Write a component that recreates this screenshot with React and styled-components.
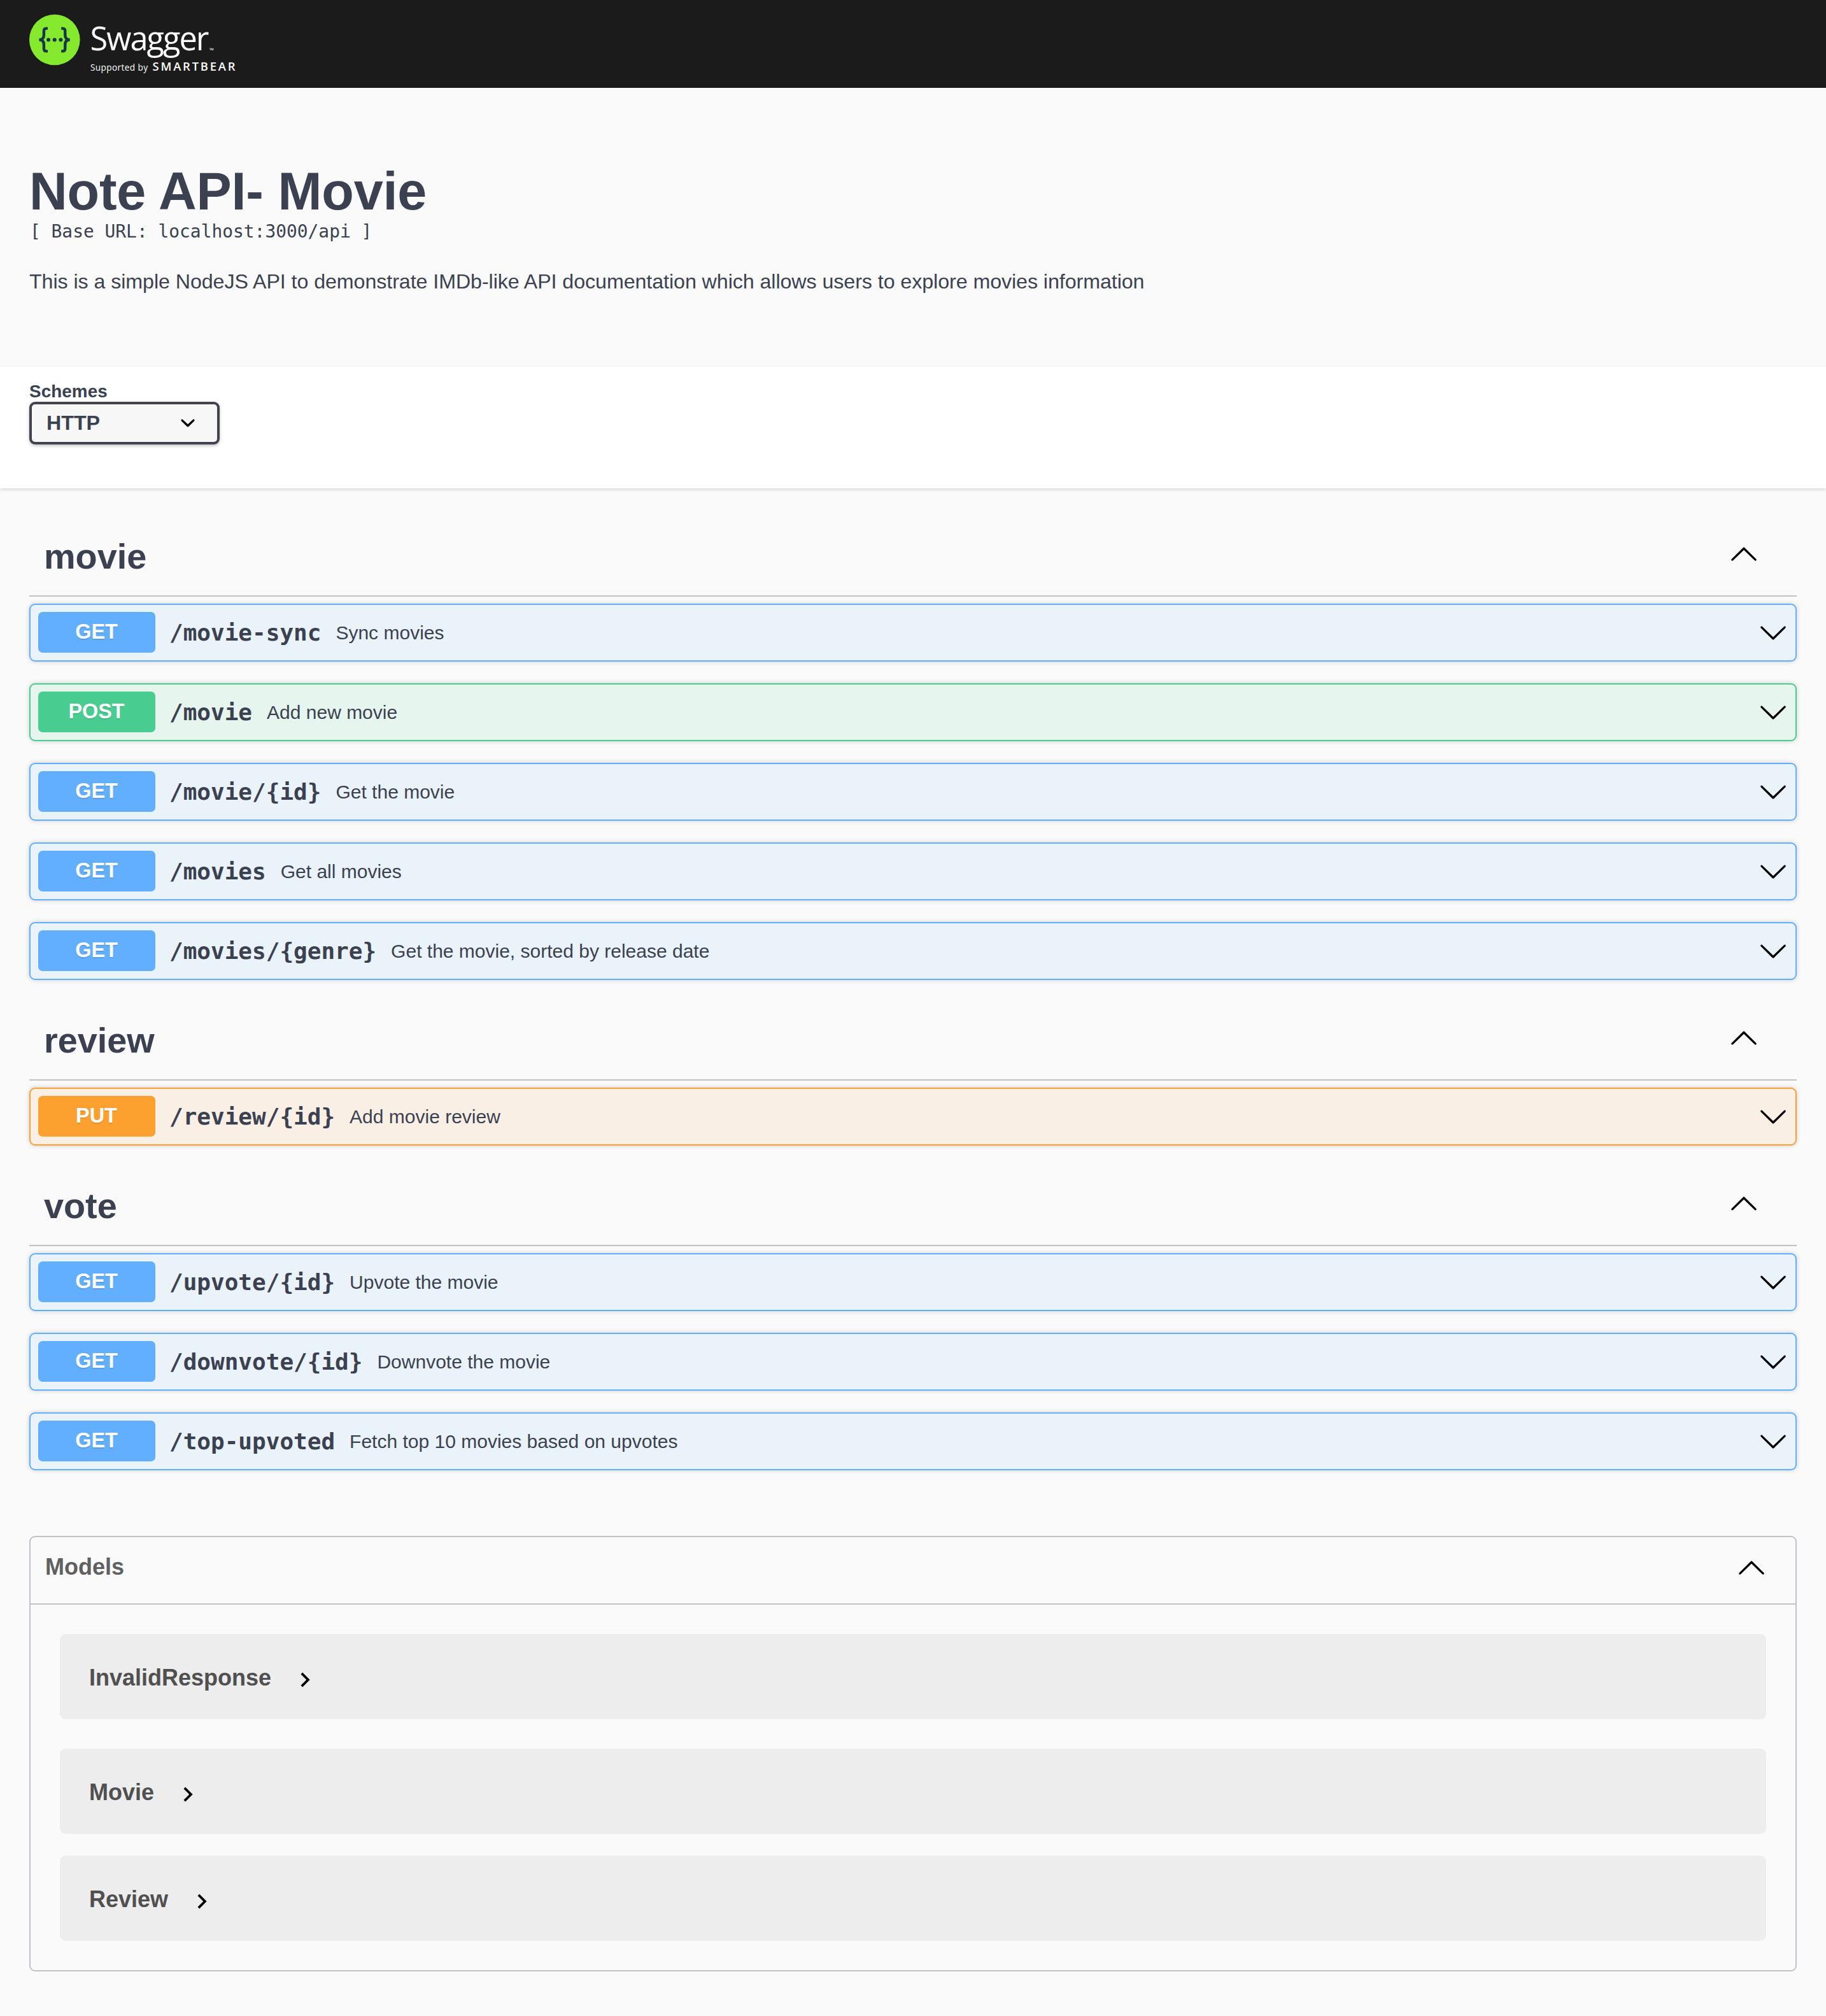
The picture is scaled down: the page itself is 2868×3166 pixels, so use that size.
import React from "react";
import styled, { createGlobalStyle } from "styled-components";

const sans = '"Liberation Sans", Arial, sans-serif';
const mono = '"DejaVu Sans Mono", monospace';

const METHOD_COLORS = {
  GET: { main: "#61affe", soft: "#eaf2fa" },
  POST: { main: "#49cc90", soft: "#e6f5ed" },
  PUT: { main: "#fca130", soft: "#faefe4" },
};

const SECTIONS = [
  {
    name: "movie",
    operations: [
      ["GET", "/movie-sync", "Sync movies"],
      ["POST", "/movie", "Add new movie"],
      ["GET", "/movie/{id}", "Get the movie"],
      ["GET", "/movies", "Get all movies"],
      ["GET", "/movies/{genre}", "Get the movie, sorted by release date"],
    ],
  },
  { name: "review", operations: [["PUT", "/review/{id}", "Add movie review"]] },
  {
    name: "vote",
    operations: [
      ["GET", "/upvote/{id}", "Upvote the movie"],
      ["GET", "/downvote/{id}", "Downvote the movie"],
      ["GET", "/top-upvoted", "Fetch top 10 movies based on upvotes"],
    ],
  },
];

const MODELS = [
  { name: "InvalidResponse", gap: 46 },
  { name: "Movie", gap: 34 },
  { name: "Review", gap: 0 },
];

const GlobalStyle = createGlobalStyle`
  *, *::before, *::after { box-sizing: border-box; }
  body {
    margin: 0;
    background: #fafafa;
    color: #3b4151;
    font-family: ${sans};
  }
  h1, h2, h3, h4, p, pre { margin: 0; font-weight: inherit; }
`;

const Page = styled.div`
  min-height: 3166px;
  background: #fafafa;
`;

const Topbar = styled.header`
  display: flex;
  height: 138px;
  padding: 0 46px;
  background: #1b1b1b;
`;

const Logo = styled.svg`
  display: block;
  width: 340px;
  height: 138px;
`;

const Info = styled.section`
  height: 438px;
  padding: 118px 46px 0;
`;

const Title = styled.h1`
  font-size: 82.8px;
  font-weight: 700;
  letter-spacing: -0.2px;
  line-height: 90px;
`;

const BaseUrl = styled.pre`
  padding-left: 1px;
  font: 27.9px/36px ${mono};
`;

const Description = styled.p`
  margin-top: 37px;
  font-size: 32.2px;
  letter-spacing: -0.06px;
  line-height: 46px;
`;

const SchemeBar = styled.section`
  height: 191px;
  padding: 23px 46px 0;
  background: #fff;
  box-shadow: 0 2px 5px rgba(0, 0, 0, 0.15);
`;

const SchemeLabel = styled.div`
  font-size: 27.8px;
  font-weight: 700;
  letter-spacing: 0.1px;
  line-height: 32px;
`;

const SchemeSelect = styled.div`
  display: flex;
  align-items: center;
  justify-content: space-between;
  width: 299px;
  height: 67px;
  padding: 0 23px 1px;
  border: 4px solid #41444e;
  border-radius: 9px;
  background: #f7f7f7;
  box-shadow: 0 2px 5px rgba(0, 0, 0, 0.25);
  font-size: 32.2px;
  font-weight: 700;
`;

const Glyph = styled.svg`
  display: block;
  flex: none;
  width: 46px;
  height: 46px;
  fill: #000;
`;

const Content = styled.main`
  padding: 46px 46px 0;
`;

const SectionHeader = styled.div`
  display: flex;
  align-items: center;
  justify-content: space-between;
  height: 124px;
  margin-bottom: 11px;
  padding: 0 60px 0 23px;
  border-bottom: 2px solid rgba(59, 65, 81, 0.3);

  & > svg { margin-bottom: 10px; }
`;

const SectionName = styled.h3`
  padding-bottom: 1px;
  font-size: 55.8px;
  font-weight: 700;
  line-height: 64px;
`;

const Operation = styled.div`
  display: flex;
  align-items: center;
  height: 91px;
  margin-bottom: 34px;
  padding: 0 12px;
  border: 2px solid ${(p) => METHOD_COLORS[p.$method].main};
  border-radius: 9px;
  background: ${(p) => METHOD_COLORS[p.$method].soft};
  box-shadow: 0 0 7px rgba(0, 0, 0, 0.19);

  & > svg { margin-bottom: 1px; }
`;

const Method = styled.span`
  width: 184px;
  height: 64px;
  margin: 0 22px 1px 0;
  padding-right: 1px;
  border-radius: 7px;
  background: ${(p) => METHOD_COLORS[p.$method].main};
  color: #fff;
  font-size: 32.4px;
  font-weight: 700;
  line-height: 63px;
  text-align: center;
  text-shadow: 0 2px 0 rgba(0, 0, 0, 0.1);
`;

const Path = styled.span`
  font: 700 36px/42px ${mono};
`;

const Summary = styled.span`
  flex: 1;
  padding: 1px 0 0 23px;
  font-size: 30px;
  line-height: 36px;
`;

const Models = styled.section`
  margin-top: 103px;
  border: 2px solid #c1c2c8;
  border-radius: 9px;
`;

const ModelsHeader = styled.div`
  display: flex;
  align-items: center;
  justify-content: space-between;
  height: 106px;
  padding: 0 46px 10px 23px;
  border-bottom: 2px solid #c1c2c8;
  color: #606060;
  font-size: 36px;
  font-weight: 700;
`;

const ModelList = styled.div`
  padding: 46px;
`;

const ModelBox = styled.div`
  display: flex;
  align-items: center;
  gap: 30px;
  height: 134px;
  margin-bottom: ${(p) => p.$gap}px;
  padding: 4px 46px 0;
  border-radius: 9px;
  background: #ededed;
  color: #505050;
  font-size: 36px;
  font-weight: 700;

  & > svg { margin-top: 6px; }
`;

const ArrowDown = () => (
  <Glyph viewBox="0 0 20 20">
    <path d="M17.418 6.109c.272-.268.709-.268.979 0s.271.701 0 .969l-7.908 7.83c-.27.268-.707.268-.979 0l-7.908-7.83c-.27-.268-.27-.701 0-.969.271-.268.709-.268.979 0L10 13.25l7.418-7.141z" />
  </Glyph>
);

const ArrowUp = () => (
  <Glyph viewBox="0 0 20 20">
    <path d="M17.418 14.908c.272.268.709.268.979 0s.271-.701 0-.969l-7.908-7.83c-.27-.268-.707-.268-.979 0l-7.908 7.83c-.27.268-.27.701 0 .969.271.268.709.268.979 0L10 7.767l7.418 7.141z" />
  </Glyph>
);

const SelectArrow = () => (
  <Glyph viewBox="0 0 20 20">
    <path d="M13.418 7.859c.271-.268.709-.268.978 0s.272.701 0 .969l-3.908 3.83c-.27.268-.707.268-.979 0l-3.908-3.83c-.27-.267-.27-.701 0-.969.271-.268.709-.268.978 0L10 11l3.418-3.141z" />
  </Glyph>
);

const ToggleArrow = () => (
  <Glyph viewBox="0 0 24 24">
    <path d="M10 6L8.59 7.41 13.17 12l-4.58 4.59L10 18l6-6z" />
  </Glyph>
);

const SwaggerLogo = () => (
  <Logo viewBox="46 0 340 138">
    <circle cx="85.8" cy="62.5" r="39.8" fill="#85ea2d" />
    <g fill="none" stroke="#173647" strokeWidth="4.4">
      <path d="M75 44.6h-2.2q-3.9 0-3.9 4.2v6.4c0 4-1.4 7.2-7.4 7.3 6 .1 7.4 3.3 7.4 7.3v6.4q0 4.2 3.9 4.2H75" />
      <path d="M96.2 44.6h2.2q3.9 0 3.9 4.2v6.4c0 4 1.4 7.2 7.4 7.3-6 .1-7.4 3.3-7.4 7.3v6.4q0 4.2-3.9 4.2h-2.2" />
    </g>
    <g fill="#173647">
      <circle cx="76" cy="62.5" r="3" />
      <circle cx="85.7" cy="62.5" r="3" />
      <circle cx="95.4" cy="62.5" r="3" />
    </g>
    <g fill="#fff" fontFamily='"Open Sans", sans-serif'>
      <text x="141.5" y="78.7" fontSize="50.5" textLength="187" lengthAdjust="spacing">Swagger</text>
      <text x="329" y="82" fontSize="9">™</text>
      <text x="142" y="110.6" fontSize="13.6" textLength="90">Supported by</text>
      <text x="239.5" y="110.6" fontSize="18.4" fontWeight="600" textLength="130">SMARTBEAR</text>
    </g>
  </Logo>
);

export default function App() {
  return (
    <Page>
      <GlobalStyle />
      <Topbar>
        <SwaggerLogo />
      </Topbar>
      <Info>
        <Title>Note API- Movie</Title>
        <BaseUrl>[ Base URL: localhost:3000/api ]</BaseUrl>
        <Description>
          This is a simple NodeJS API to demonstrate IMDb-like API documentation which allows users to explore movies
          information
        </Description>
      </Info>
      <SchemeBar>
        <SchemeLabel>Schemes</SchemeLabel>
        <SchemeSelect>
          HTTP
          <SelectArrow />
        </SchemeSelect>
      </SchemeBar>
      <Content>
        {SECTIONS.map((section) => (
          <section key={section.name}>
            <SectionHeader>
              <SectionName>{section.name}</SectionName>
              <ArrowUp />
            </SectionHeader>
            {section.operations.map(([method, path, summary]) => (
              <Operation key={path} $method={method}>
                <Method $method={method}>{method}</Method>
                <Path>{path}</Path>
                <Summary>{summary}</Summary>
                <ArrowDown />
              </Operation>
            ))}
          </section>
        ))}
        <Models>
          <ModelsHeader>
            Models
            <ArrowUp />
          </ModelsHeader>
          <ModelList>
            {MODELS.map((model) => (
              <ModelBox key={model.name} $gap={model.gap}>
                {model.name}
                <ToggleArrow />
              </ModelBox>
            ))}
          </ModelList>
        </Models>
      </Content>
    </Page>
  );
}
